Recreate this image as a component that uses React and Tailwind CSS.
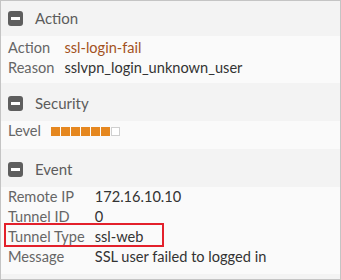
import React from "react";

function MinusIcon() {
  return (
    <div className="w-[15px] h-[15px] rounded-[3px] bg-[#5e5e5e] flex items-center justify-center shrink-0">
      <div className="w-[9px] h-[3px] bg-white" />
    </div>
  );
}

function Header({ title }) {
  return (
    <div className="h-[35px] flex items-center gap-[12px] pl-[7px] bg-[#f3f3f3]">
      <MinusIcon />
      <span className="text-[15px] text-[#5c5c5c]">{title}</span>
    </div>
  );
}

function Rows({ rows, pt = "pt-[2px]", pb = "pb-[5px]" }) {
  return (
    <div className={`bg-[#fafafa] ${pt} ${pb} pl-[7px]`}>
      <table className="border-collapse">
        <tbody>
          {rows.map((r, i) => (
            <tr key={i} className="h-[20px]">
              <td className="pr-[10px] text-[14.6px] leading-[20px] text-[#666] whitespace-nowrap p-0 align-middle">{r[0]}</td>
              <td className={`text-[14.6px] leading-[20px] whitespace-nowrap p-0 align-middle ${r[2] || "text-[#333]"}`}>{r[1]}</td>
            </tr>
          ))}
        </tbody>
      </table>
    </div>
  );
}

function Level() {
  return (
    <div className="flex items-center gap-[1px]">
      {[0, 1, 2, 3, 4, 5].map((i) => (
        <div key={i} className="w-[9px] h-[9px] bg-[#e5871f]" />
      ))}
      <div className="w-[9px] h-[9px] border border-[#cfcfcf] bg-white" />
    </div>
  );
}

export default function App() {
  return (
    <div
      className="w-[341px] h-[280px] border border-[#c4c4c4] bg-[#f3f3f3] relative overflow-hidden"
      style={{ fontFamily: "Lato, 'Open Sans', sans-serif" }}
    >
      <Header title="Action" />
      <Rows
        rows={[
          ["Action", "ssl-login-fail", "text-[#a3521e]"],
          ["Reason", "sslvpn_login_unknown_user"],
        ]}
      />
      <div className="mt-[3px]">
        <Header title="Security" />
        <Rows pt="pt-[0px]" pb="pb-[8px]" rows={[["Level", <Level />]]} />
      </div>
      <div className="mt-[3px]">
        <Header title="Event" />
        <Rows
          pt="pt-[0px]"
          pb="pb-[7px]"
          rows={[
            ["Remote IP", "172.16.10.10"],
            ["Tunnel ID", "0"],
            ["Tunnel Type", "ssl-web"],
            ["Message", "SSL user failed to logged in"],
          ]}
        />
      </div>
      <div className="absolute left-[3px] top-[222px] w-[160px] h-[24px] border-2 border-[#e3202b]" />
    </div>
  );
}
